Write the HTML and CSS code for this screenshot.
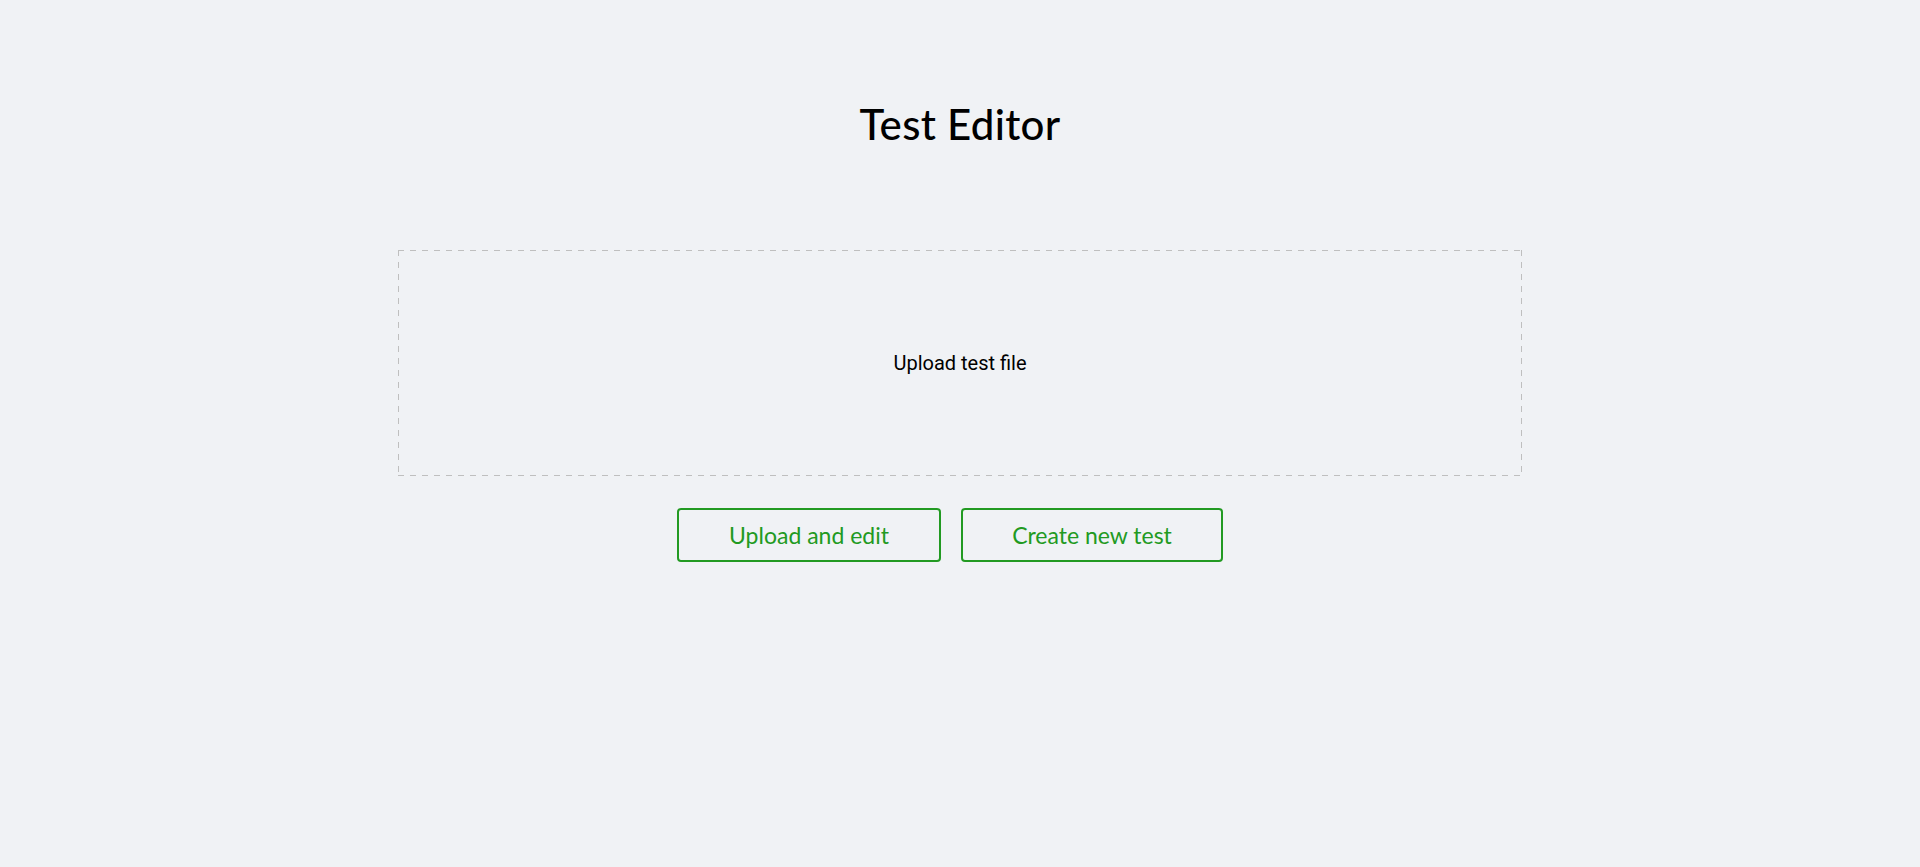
FILE: index.html
```html
<!DOCTYPE html>
<html lang="en">
<head>
<meta charset="utf-8">
<title>Test Editor</title>
<link rel="stylesheet" href="styles.css">
</head>
<body>
<main class="page">
  <h1 class="title">Test Editor</h1>
  <div class="dropzone">
    <span class="dropzone-text">Upload test file</span>
  </div>
  <div class="actions">
    <button class="btn btn-upload">Upload and edit</button>
    <button class="btn btn-create">Create new test</button>
  </div>
</main>
</body>
</html>
```

FILE: styles.css
```css
html, body {
  margin: 0;
  padding: 0;
  background: #f0f2f5;
  height: 100%;
}

.page {
  display: flex;
  flex-direction: column;
  align-items: center;
  padding-top: 98px;
  font-family: Lato, "Open Sans", sans-serif;
}

.title {
  margin: 0;
  font-family: Lato, sans-serif;
  font-weight: 500;
  font-size: 42px;
  line-height: 52px;
  color: #000;
  letter-spacing: 0.3px;
}

.dropzone {
  box-sizing: border-box;
  margin-top: 100px;
  width: 1124px;
  height: 226px;
  display: flex;
  align-items: center;
  justify-content: center;
  background-image:
    repeating-linear-gradient(to right, #bfbfbf 0 6px, transparent 6px 12px),
    repeating-linear-gradient(to right, #bfbfbf 0 6px, transparent 6px 12px),
    repeating-linear-gradient(to bottom, #bfbfbf 0 6px, transparent 6px 12px),
    repeating-linear-gradient(to bottom, #bfbfbf 0 6px, transparent 6px 12px);
  background-size: 100% 1px, 100% 1px, 1px 100%, 1px 100%;
  background-position: left top, left bottom, left top, right top;
  background-repeat: no-repeat;
}

.dropzone-text {
  font-family: Roboto, sans-serif;
  font-size: 20px;
  color: #000;
}

.actions {
  display: flex;
  margin-top: 32px;
  padding-left: 0;
}

.btn {
  box-sizing: border-box;
  height: 54px;
  margin: 0 20px 0 0;
  background: transparent;
  border: 2px solid #229a22;
  border-radius: 4px;
  color: #229a22;
  font-family: Lato, sans-serif;
  font-size: 23px;
  cursor: pointer;
}

.btn-upload {
  width: 264px;
}

.btn-create {
  width: 262px;
}
```
